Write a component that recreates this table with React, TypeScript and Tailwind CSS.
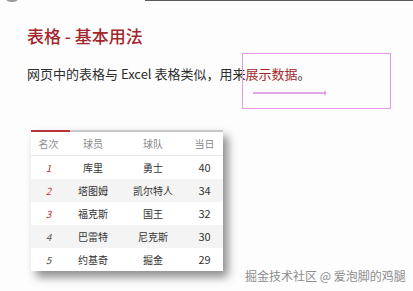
import React from "react";

const rows = [
  { n: "1", p: "库里", t: "勇士", s: "40" },
  { n: "2", p: "塔图姆", t: "凯尔特人", s: "34" },
  { n: "3", p: "福克斯", t: "国王", s: "32" },
  { n: "4", p: "巴雷特", t: "尼克斯", s: "30" },
  { n: "5", p: "约基奇", t: "掘金", s: "29" },
];

export default function App() {
  return (
    <div
      className="relative w-[413px] h-[291px] overflow-hidden bg-[#fdfdfd] text-[#333]"
      style={{ fontFamily: '"Noto Sans CJK SC", "Noto Sans", sans-serif' }}
    >
      {/* cropped edges at top */}
      <div className="absolute left-[4px] top-[-12px] w-[16px] h-[14px] rounded-full bg-[#9a9a9a]" />
      <div className="absolute left-[145px] top-0 w-[268px] h-[1px] bg-[#5a5a5a]" />

      <div className="flex flex-col pl-[27px] pt-[25px]">
        <h1 className="text-[17px] leading-[22px] font-medium text-[#a4262c]">表格 - 基本用法</h1>
        <p className="mt-[18px] text-[13px] leading-[18px] text-[#2d2d2d]">
          网页中的表格与 Excel 表格类似，用来<span className="text-[#a4262c]">展示数据</span>。
        </p>

        <div className="mt-[47px] ml-[4px] w-[192px] bg-white shadow-[5px_6px_9px_rgba(0,0,0,0.45)] text-[10px]">
          <div className="flex h-[2px]">
            <div className="w-[39px] bg-[#b5343a]" />
            <div className="flex-1 bg-[#c9c9c9]" />
          </div>
          <div className="grid grid-cols-[35px_54px_66px_37px] h-[24px] items-center text-[#8a8a8a] border-b border-[#e6e6e6]">
            <div className="text-center">名次</div>
            <div className="text-center">球员</div>
            <div className="text-center">球队</div>
            <div className="text-center">当日</div>
          </div>
          {rows.map((r, i) => (
            <div
              key={r.n}
              className={`grid grid-cols-[35px_54px_66px_37px] h-[23px] items-center text-[#333] ${
                i % 2 === 1 ? "bg-[#f4f4f4]" : "bg-white"
              }`}
            >
              <div className={`text-center italic ${i < 3 ? "text-[#c0343c]" : "text-[#555]"}`}>{r.n}</div>
              <div className="text-center">{r.p}</div>
              <div className="text-center">{r.t}</div>
              <div className="text-center text-[11px]">{r.s}</div>
            </div>
          ))}
        </div>
      </div>

      {/* annotation box */}
      <div className="absolute left-[242px] top-[53px] w-[149px] h-[56px] border-[1.5px] border-[#e89ae8]" />
      <svg className="absolute left-[252px] top-[89px]" width="76" height="8" viewBox="0 0 76 8">
        <line x1="1" y1="4" x2="74" y2="4" stroke="#d98ad9" strokeWidth="1.3" />
        <line x1="73" y1="1.5" x2="73" y2="6.5" stroke="#d98ad9" strokeWidth="1" />
      </svg>

      <div
        className="absolute left-[245px] top-[267px] text-[12px] leading-[18px] text-[#8c8c8c]"
        style={{ textShadow: "0 0 2px #ffffff" }}
      >
        掘金技术社区 @ 爱泡脚的鸡腿
      </div>
    </div>
  );
}
